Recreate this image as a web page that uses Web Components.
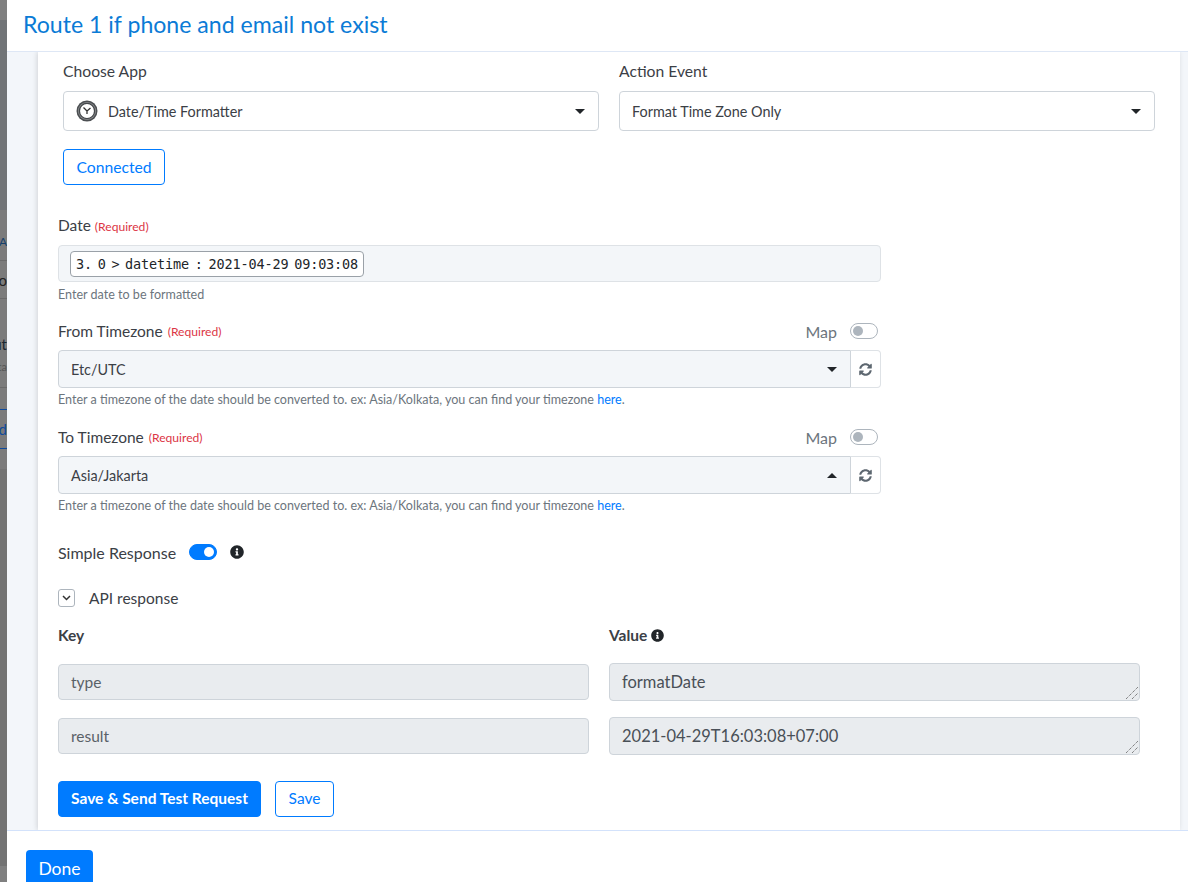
<!DOCTYPE html>
<html>
<head>
<meta charset="utf-8">
<style>
  html, body { margin: 0; height: 100%; overflow: hidden; }
  body { display: flex; font-family: "Lato", "Noto Sans", sans-serif; color: #212529; background: #7c7c7c; }
  route-modal { flex: 1; min-width: 0; }
</style>
</head>
<body>
<page-peek></page-peek>
<route-modal heading="Route 1 if phone and email not exist">
  <action-form></action-form>
</route-modal>

<script>
const ARROW = `<svg width="10" height="5" viewBox="0 0 10 5"><path d="M0 0h10L5 5z" fill="#212529"/></svg>`;
const INFO_PATH = "M256 8C119.043 8 8 119.083 8 256c0 136.997 111.043 248 248 248s248-111.003 248-248C504 119.083 392.957 8 256 8zm0 110c23.196 0 42 18.804 42 42s-18.804 42-42 42-42-18.804-42-42 18.804-42 42-42zm56 254c0 6.627-5.373 12-12 12h-88c-6.627 0-12-5.373-12-12v-24c0-6.627 5.373-12 12-12h12v-64h-12c-6.627 0-12-5.373-12-12v-24c0-6.627 5.373-12 12-12h64c6.627 0 12 5.373 12 12v100h12c6.627 0 12 5.373 12 12v24z";
const SYNC_PATH = "M370.72 133.28C339.458 104.008 298.888 87.962 255.848 88c-77.458.068-144.328 53.178-162.791 126.85-1.344 5.363-6.122 9.15-11.651 9.15H24.103c-7.498 0-13.194-6.807-11.807-14.176C33.933 94.924 134.813 8 256 8c66.448 0 126.791 26.136 171.315 68.685L463.03 40.97C478.149 25.851 504 36.559 504 57.941V192c0 13.255-10.745 24-24 24H345.941c-21.382 0-32.09-25.851-16.971-40.971l41.75-41.749zM32 296h134.059c21.382 0 32.09 25.851 16.971 40.971l-41.75 41.75c31.262 29.273 71.835 45.319 114.876 45.28 77.418-.07 144.315-53.144 162.787-126.849 1.344-5.363 6.122-9.15 11.651-9.15h57.304c7.498 0 13.194 6.807 11.807 14.176C478.067 417.076 377.187 504 256 504c-66.448 0-126.791-26.136-171.315-68.685L48.97 471.03C33.851 486.149 8 475.441 8 454.059V320c0-13.255 10.745-24 24-24z";
const info = (s) => `<svg width="${s}" height="${s}" viewBox="0 0 512 512"><path d="${INFO_PATH}" fill="#212529"/></svg>`;

// the dimmed page that shows behind the modal, only a sliver of it is visible
class PagePeek extends HTMLElement {
  constructor() {
    super();
    this.attachShadow({ mode: "open" });
  }
  connectedCallback() {
    this.shadowRoot.innerHTML = `
      <style>
        :host { display: flex; flex-direction: column; flex: none; width: 7px; height: 882px; overflow: hidden; background: #7b7b7b; font-size: 15px; color: #222; }
        div { flex: none; display: flex; justify-content: flex-end; overflow: hidden; white-space: nowrap; line-height: 20px; align-items: center; }
        .hr { border-bottom: 1px solid #6a6a6a; }
        .blue { border-bottom: 1px solid #0e4a9c; color: #0e4a9c; }
      </style>
      <div style="height:20px;background:#808080"></div>
      <div style="height:190px;background:#717477"></div>
      <div class="hr" style="height:42px;padding-bottom:8px;align-items:flex-end;color:#15406b;font-size:12px">A</div>
      <div class="hr" style="height:37px">o</div>
      <div style="height:35px"></div>
      <div style="height:20px;color:#1b2630">ut</div>
      <div class="hr" style="height:30px;padding-top:3px;color:#555;font-size:11px;align-items:flex-start">ta</div>
      <div class="blue" style="height:21px"></div>
      <div class="blue" style="height:38px">d</div>
      <div style="height:20px"></div>
      <div style="height:397px;background:#737373"></div>
      <div style="height:17px;background:#808080"></div>`;
  }
}

class RouteModal extends HTMLElement {
  constructor() {
    super();
    this.attachShadow({ mode: "open" });
  }
  connectedCallback() {
    this.shadowRoot.innerHTML = `
      <style>
        :host { display: flex; flex-direction: column; height: 882px; background: #fff; }
        .title { box-sizing: border-box; height: 52px; border-bottom: 1px solid #dee7f5; padding: 8px 0 0 16px;
          font-size: 23.1px; line-height: 32px; color: #0b7bd6; flex: none; }
        .body { flex: 1; min-height: 0; background: #f3f6fa; padding: 0 8px 0 31px; overflow: hidden; }
        .foot { flex: none; height: 52px; border-top: 1px solid #d3e2fb; box-sizing: border-box; padding: 19px 0 0 19px; overflow: hidden; }
        .done { display: inline-block; box-sizing: border-box; width: 67px; height: 40px; background: #007bff; color: #fff;
          border-radius: 4px; font-size: 17.5px; line-height: 38px; text-align: center; }
      </style>
      <div class="title">${this.getAttribute("heading")}</div>
      <div class="body"><slot></slot></div>
      <div class="foot"><span class="done">Done</span></div>`;
  }
}

class SelectBox extends HTMLElement {
  constructor() {
    super();
    this.attachShadow({ mode: "open" });
  }
  connectedCallback() {
    const up = this.hasAttribute("up");
    this.shadowRoot.innerHTML = `
      <style>
        :host { display: flex; align-items: center; box-sizing: border-box; height: 40px; background: #fff; border: 1px solid #ced4da;
          border-radius: 4px; padding: 0 12px; font-size: 14.4px; color: #3b4046; flex: 1; min-width: 0; }
        :host([filled]) { height: 38px; background: #f3f6f9; border-radius: 4px 0 0 4px; }
        .v { flex: 1; display: flex; align-items: center; gap: 10px; }
        svg.a { ${up ? "transform: rotate(180deg);" : ""} margin-right: 1px; }
      </style>
      <div class="v"><slot></slot></div>
      <span style="display:flex">${ARROW.replace("<svg", '<svg class="a"')}</span>`;
  }
}

class ToggleSwitch extends HTMLElement {
  constructor() {
    super();
    this.attachShadow({ mode: "open" });
  }
  connectedCallback() {
    this.shadowRoot.innerHTML = `
      <style>
        :host { display: block; flex: none; box-sizing: border-box; width: 28px; height: 16px; border-radius: 8px; border: 1px solid #adb5bd; background: #fff; position: relative; }
        :host([on]) { background: #007bff; border-color: #007bff; }
        i { position: absolute; top: 2px; left: 2px; width: 10px; height: 10px; border-radius: 50%; background: #adb5bd; }
        :host([on]) i { left: auto; right: 2px; background: #fff; }
      </style>
      <i></i>`;
  }
}

class TzField extends HTMLElement {
  constructor() {
    super();
    this.attachShadow({ mode: "open" });
  }
  connectedCallback() {
    const up = this.hasAttribute("up") ? "up" : "";
    this.shadowRoot.innerHTML = `
      <style>
        :host { display: block; width: 823px; }
        .top { display: flex; align-items: center; height: 20px; font-size: 15.5px; color: #3b4046; margin-bottom: 9px; }
        .top b { font-weight: 400; font-size: 12.1px; color: #dc3545; margin-left: 5px; }
        .map { margin-left: auto; font-size: 16px; color: #6c757d; margin-right: 13px; }
        toggle-switch { margin-right: 3px; }
        .row { display: flex; }
        .sync { box-sizing: border-box; width: 30px; height: 38px; border: 1px solid #dee2e6; border-left: 0; border-radius: 0 4px 4px 0; display: flex; align-items: center; justify-content: center; }
        .help { font-size: 12.55px; color: #6c757d; margin-top: 4px; line-height: 16px; white-space: nowrap; }
        .help a { color: #007bff; }
      </style>
      <div class="top">${this.getAttribute("label")}<b>(Required)</b><span class="map">Map</span><toggle-switch></toggle-switch></div>
      <div class="row">
        <select-box filled ${up}>${this.getAttribute("value")}</select-box>
        <div class="sync"><svg width="13" height="13" viewBox="0 0 512 512"><path d="${SYNC_PATH}" fill="#5d6770"/></svg></div>
      </div>
      <div class="help">Enter a timezone of the date should be converted to. ex: Asia/Kolkata, you can find your timezone <a>here</a>.</div>`;
  }
}

class KvRow extends HTMLElement {
  constructor() {
    super();
    this.attachShadow({ mode: "open" });
  }
  connectedCallback() {
    this.shadowRoot.innerHTML = `
      <style>
        :host { display: flex; align-items: flex-start; gap: 20px; width: 1082px; }
        div { box-sizing: border-box; background: #e9ecef; border: 1px solid #ced4da; border-radius: 4px; color: #495057; display: flex; align-items: center; padding: 0 12px; }
        .k { width: 531px; height: 36px; margin-top: 1px; font-size: 15.5px; line-height: 32px; color: #5a6168; }
        .v { width: 531px; height: 38px; font-size: 16.5px; line-height: 34px; position: relative; }
        svg { position: absolute; right: 1px; bottom: 1px; }
      </style>
      <div class="k">${this.getAttribute("k")}</div>
      <div class="v">${this.getAttribute("v")}<svg width="12" height="12" viewBox="0 0 12 12" stroke="#555" stroke-width="1" stroke-dasharray="1 1"><path d="M0 12L12 0M6 12l6-6"/></svg></div>`;
  }
}

class ActionForm extends HTMLElement {
  constructor() {
    super();
    this.attachShadow({ mode: "open" });
  }
  connectedCallback() {
    this.shadowRoot.innerHTML = `
      <style>
        :host { display: block; box-sizing: border-box; height: 778px; background: #fff; padding: 0 0 0 20px; overflow: hidden; box-shadow: -1px 0 5px rgba(0,0,0,.14); font-size: 15.5px; color: #3b4046; }
        .apps { display: flex; gap: 20px; padding: 8px 0 0 5px; width: 1097px; box-sizing: border-box; }
        .apps > div { flex: 1; min-width: 0; }
        .apps label { display: block; font-size: 15.7px; line-height: 22px; margin-bottom: 9px; }
        .conn { display: block; box-sizing: border-box; margin: 18px 0 0 5px; height: 36px; width: 102px; border: 1px solid #007bff; border-radius: 4px; color: #007bff; font-size: 15.7px; line-height: 34px; text-align: center; }
        .date { margin-top: 30px; width: 823px; }
        .lab { line-height: 20px; margin-bottom: 8px; }
        .lab b { font-weight: 400; font-size: 12.1px; color: #dc3545; }
        .inp { box-sizing: border-box; height: 37px; background: #f3f6f9; border: 1px solid #dee2e6; border-radius: 4px; padding: 5px 11px; display: flex; }
        .chip { box-sizing: border-box; width: 294px; height: 26px; border: 1px solid #9aa1a8; border-radius: 4px; background: #fff; padding: 0 5px; font: 13.5px/24px "DejaVu Sans Mono", monospace; letter-spacing: -0.13px; word-spacing: -2.3px; color: #212529; white-space: pre; }
        .help { font-size: 12.55px; color: #6c757d; margin: 5px 0 -1px; line-height: 16px; }
        tz-field { margin-top: 19px; }
        .simple { display: flex; align-items: center; gap: 13px; margin-top: 28px; height: 20px; font-size: 16px; }
        .api { display: flex; align-items: center; margin-top: 26px; height: 20px; font-size: 15.5px; gap: 14px; }
        .chev { box-sizing: border-box; width: 17px; height: 18px; border: 1px solid #adb5bd; border-radius: 3px; display: flex; align-items: center; justify-content: center; }
        .heads { display: flex; gap: 20px; width: 1082px; margin-top: 17px; font-weight: 700; font-size: 15.5px; line-height: 20px; }
        .heads div { width: 531px; display: flex; align-items: center; gap: 4px; }
        kv-row { margin-top: 18px; }
        kv-row + kv-row { margin-top: 16px; }
        .btns { display: flex; gap: 14px; margin-top: 26px; }
        .btn { box-sizing: border-box; height: 36px; border-radius: 4px; font-size: 15.5px; line-height: 33px; text-align: center; border: 1px solid #007bff; }
        .pri { width: 203px; background: #007bff; color: #fff; font-weight: 700; }
        .sec { width: 59px; color: #007bff; }
      </style>
      <div class="apps">
        <div>
          <label>Choose App</label>
          <select-box>
            <svg width="22" height="22" viewBox="0 0 22 22" fill="none"><circle cx="11" cy="11" r="10.500" fill="#4c4f52"/><circle cx="11" cy="11" r="9" fill="#8d8f91"/><circle cx="11" cy="11" r="7.600" fill="#fff" stroke="#45484b" stroke-width="1.300"/><path d="M11 11L7.500 7.500M11 11l3.500-3M11 11v3" stroke="#333" stroke-width="1.300"/></svg>
            Date/Time Formatter
          </select-box>
        </div>
        <div>
          <label>Action Event</label>
          <select-box>Format Time Zone Only</select-box>
        </div>
      </div>
      <span class="conn">Connected</span>
      <div class="date">
        <div class="lab">Date <b>(Required)</b></div>
        <div class="inp"><span class="chip">3. 0 &gt; datetime : 2021-04-29 09:03:08</span></div>
        <div class="help">Enter date to be formatted</div>
      </div>
      <tz-field label="From Timezone" value="Etc/UTC"></tz-field>
      <tz-field label="To Timezone" value="Asia/Jakarta" up></tz-field>
      <div class="simple">Simple Response <toggle-switch on></toggle-switch> ${info(14)}</div>
      <div class="api"><span class="chev"><svg width="9" height="6" viewBox="0 0 9 6" fill="none" stroke="#333" stroke-width="1.500"><path d="M1 1l3.500 3.500L8 1"/></svg></span>API response</div>
      <div class="heads"><div>Key</div><div>Value ${info(13)}</div></div>
      <kv-row k="type" v="formatDate"></kv-row>
      <kv-row k="result" v="2021-04-29T16:03:08+07:00"></kv-row>
      <div class="btns"><span class="btn pri">Save &amp; Send Test Request</span><span class="btn sec">Save</span></div>`;
  }
}

customElements.define("page-peek", PagePeek);
customElements.define("select-box", SelectBox);
customElements.define("toggle-switch", ToggleSwitch);
customElements.define("tz-field", TzField);
customElements.define("kv-row", KvRow);
customElements.define("action-form", ActionForm);
customElements.define("route-modal", RouteModal);
</script>
</body>
</html>
